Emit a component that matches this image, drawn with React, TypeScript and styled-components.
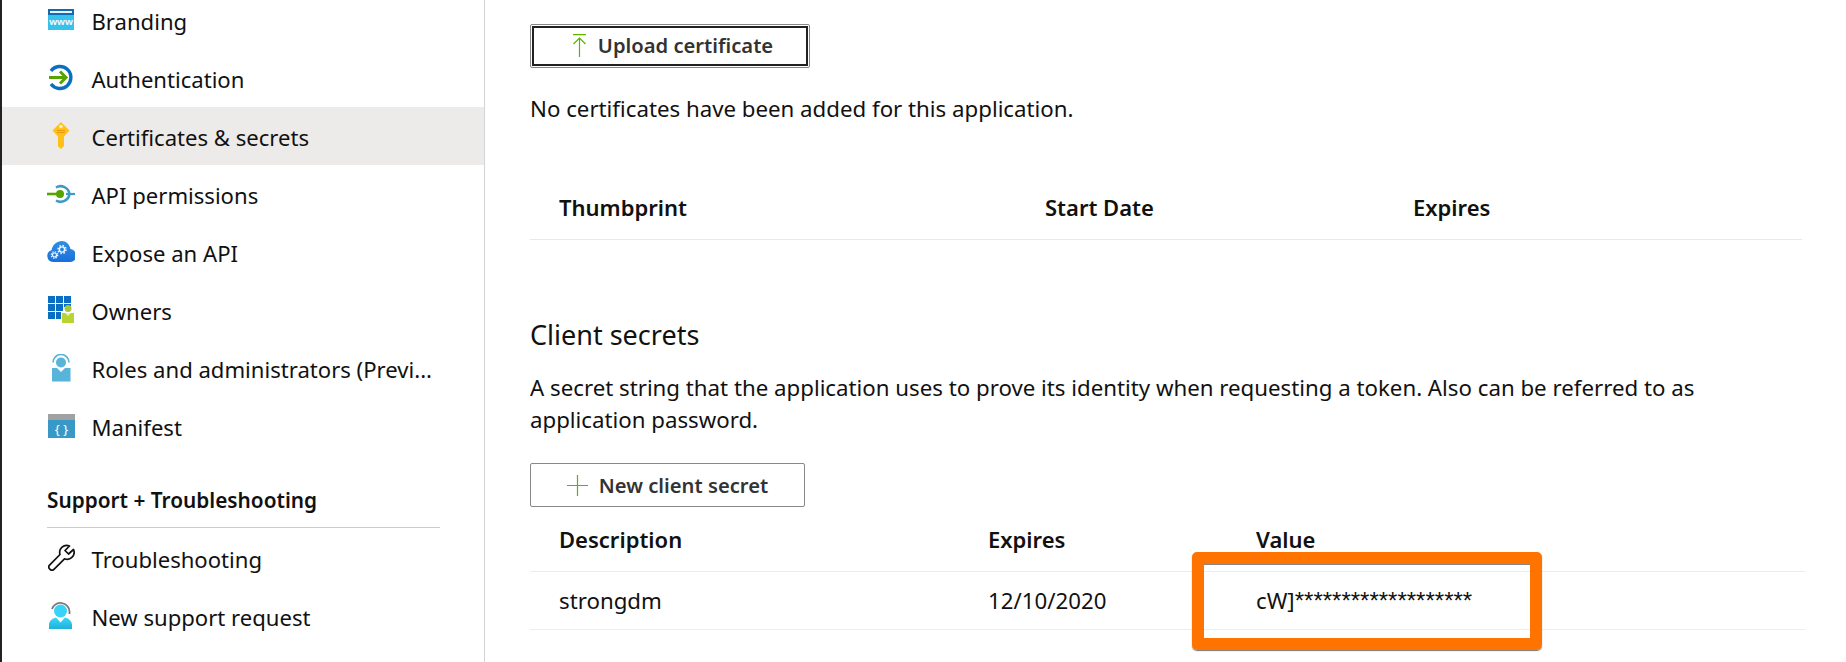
import React from 'react'
import styled, { createGlobalStyle } from 'styled-components'

const GlobalStyle = createGlobalStyle`
    html, body {
        margin: 0;
        padding: 0;
        background: #fff;
        overflow: hidden;
    }
    body {
        font-family: "Noto Sans", "Open Sans", sans-serif;
        color: #111;
    }
`

const Page = styled.div`
    display: grid;
    grid-template-columns: 483px 1fr;
    width: 1846px;
    height: 662px;
    overflow: hidden;
    border-left: 2px solid #222;
    box-sizing: border-box;
`

const Sidebar = styled.nav`
    border-right: 1px solid #d4d4d4;
    margin-top: -9px;
`

const NavRow = styled.div<{ $active?: boolean }>`
    box-sizing: border-box;
    height: 58px;
    display: flex;
    align-items: center;
    gap: 16.5px;
    padding: 2px 0 0 45px;
    font-size: 22.1px;
    white-space: nowrap;
    background: ${p => (p.$active ? '#edebe9' : 'transparent')};
`

const IconSlot = styled.span`
    width: 28px;
    height: 28px;
    flex: none;
    display: flex;
    align-items: center;
    justify-content: center;
    margin-top: -3px;

    svg {
        display: block;
    }
`

const SectionTitle = styled.div`
    margin: 31px 0 1px 45px;
    width: 393px;
    padding-bottom: 13px;
    border-bottom: 1px solid #ccc;
    font-size: 20.8px;
    font-weight: 600;
    line-height: 28px;
`

const Main = styled.main`
    padding: 24px 41px 0 45px;
`

const ActionButton = styled.div<{ $focused?: boolean; $width: number }>`
    box-sizing: border-box;
    width: ${p => p.$width}px;
    height: 44px;
    display: flex;
    align-items: center;
    justify-content: center;
    gap: 11px;
    padding: ${p => (p.$focused ? '0 0 2px 5px' : '0')};
    border: 1px solid #8a8886;
    border-radius: 2px;
    font-size: 20.2px;
    font-weight: 600;
    color: #333;
    background: #fff;
    outline: ${p => (p.$focused ? '2px solid #222' : 'none')};
    outline-offset: -4px;
`

const Note = styled.p`
    margin: 25px 0 0;
    font-size: 22.25px;
    line-height: 32px;
`

const Table = styled.div<{ $columns: string }>`
    display: grid;
    grid-template-columns: ${p => p.$columns};
    padding-left: 29px;
    align-items: center;
`

const HeaderTable = styled(Table)`
    margin-top: 49px;
    height: 66px;
    width: 1272px;
    box-sizing: border-box;
    border-bottom: 1px solid #e8e8e8;
`

const HeadCell = styled.div`
    font-size: 22px;
    font-weight: 600;
`

const Heading = styled.h2`
    margin: 77px 0 0;
    font-size: 27px;
    font-weight: 400;
    line-height: 36px;
`

const Description = styled.p`
    margin: 19px 0 0;
    font-size: 22.25px;
    line-height: 32px;
    width: 1175px;
`

const SecretHead = styled(Table)`
    height: 65px;
    width: 1275px;
    box-sizing: border-box;
    border-bottom: 1px solid #ededed;
`

const SecretRow = styled(Table)`
    height: 58px;
    width: 1275px;
    box-sizing: border-box;
    border-bottom: 1px solid #ededed;
    font-size: 22.25px;
`

const ButtonGap = styled.div`
    margin-top: 27px;
`

const Stars = styled.span`
    font-family: "Liberation Sans", sans-serif;
    font-size: 24px;
`

const Highlight = styled.div`
    position: absolute;
    left: 1192px;
    top: 552px;
    width: 350px;
    height: 98px;
    box-sizing: border-box;
    border: 12px solid #ff7300;
    border-radius: 5px;
    box-shadow: 0 1px 1px #777, inset 0 1px 0 #888;
`

const BrandingIcon = () => (
    <svg width="26" height="22" viewBox="0 0 26 22">
        <rect width="26" height="21" fill="#36c2ea" />
        <rect width="26" height="6" fill="#0f6cb3" />
        <rect x="2" y="2" width="22" height="2" fill="#e9f5fb" />
        <text x="13" y="16" textAnchor="middle" fontSize="9.5" fontWeight="600" fill="#fff" fontFamily="Noto Sans, sans-serif">www</text>
    </svg>
)

const AuthIcon = () => (
    <svg width="26" height="27" viewBox="0 0 26 27" fill="none">
        <path d="M3 7a11 11 0 1 1 0 13" stroke="#0a6fc2" strokeWidth="3.4" />
        <path d="M1 13.5h17M12 7.5l6 6-6 6" stroke="#57a300" strokeWidth="3" />
    </svg>
)

const KeyIcon = () => (
    <svg width="18" height="27" viewBox="0 0 18 27">
        <path d="M9 0l8.500 8.500L12 14.500V24l-3 3-3-2.500V14.500L.5 8.500z" fill="#ffc017" />
        <circle cx="9" cy="4.500" r="1.800" fill="#fff2c4" />
        <path d="M5 8.500h8M5 10.500h8" stroke="#e79b0c" strokeWidth="1" />
    </svg>
)

const ApiIcon = () => (
    <svg width="28" height="22" viewBox="0 0 28 22" fill="none">
        <path d="M9 4.500a9 9 0 0 1 13.500 6.500M22.500 11a9 9 0 0 1-13.500 6.500" stroke="#3d9bc9" strokeWidth="2.600" />
        <path d="M19 11h9" stroke="#3d9bc9" strokeWidth="2.200" />
        <path d="M0 11h12" stroke="#57a300" strokeWidth="2.600" />
        <circle cx="13" cy="11" r="4" fill="#57a300" />
    </svg>
)

const CloudIcon = () => (
    <svg width="28" height="22" viewBox="0 0 28 22">
        <defs>
            <linearGradient id="cloudG" x1="0" y1="0" x2="0" y2="1">
                <stop offset="0" stopColor="#2f8fe0" />
                <stop offset="1" stopColor="#1a6fdb" />
            </linearGradient>
        </defs>
        <path d="M6 21a6 6 0 0 1-1.500-11.700C5.500 3.500 10 0 15 0c4 0 7.500 3 8.500 8A6.500 6.500 0 0 1 22 21z" fill="url(#cloudG)" />
        <circle cx="15" cy="8.500" r="2.600" fill="none" stroke="#f2f8fe" strokeWidth="1.400" />
        <circle cx="15" cy="8.500" r="4" fill="none" stroke="#f2f8fe" strokeWidth="1.500" strokeDasharray="1.500 1.640" />
        <circle cx="7.500" cy="14" r="2" fill="none" stroke="#f2f8fe" strokeWidth="1.200" />
        <circle cx="7.500" cy="14" r="3.200" fill="none" stroke="#f2f8fe" strokeWidth="1.300" strokeDasharray="1.300 1.210" />
    </svg>
)

const OwnersIcon = () => (
    <svg width="26" height="27" viewBox="0 0 26 27">
        <path d="M0 0h7v7H0zM8 0h7v7H8zM16 0h7v7h-7zM0 8h7v7H0zM8 8h7v7H8zM16 8h7v3h-7zM0 16h7v7H0zM8 16h5v7H8z" fill="#0a6fc2" />
        <rect x="14" y="17" width="12" height="10" fill="#b8d432" />
        <circle cx="20" cy="12.500" r="3.500" fill="#a8c83a" />
        <path d="M17 17l3 3 3-3z" fill="#e8f2b5" />
    </svg>
)

const RolesIcon = () => (
    <svg width="20" height="28" viewBox="0 0 20 28" fill="none">
        <path d="M2 8.500a8 8 0 0 1 16 0" stroke="#59b4d9" strokeWidth="1.600" />
        <circle cx="10" cy="8.500" r="5" fill="#59b4d9" />
        <path d="M1 14h5l4 4 4-4h5.500v13.500H1z" fill="#59b4d9" />
    </svg>
)

const ManifestIcon = () => (
    <svg width="27" height="24" viewBox="0 0 27 24">
        <rect width="27" height="24" fill="#3999c6" />
        <rect width="27" height="6" fill="#a0a1a2" />
        <text x="13.500" y="19.500" textAnchor="middle" fontSize="13" fill="#fff" fontFamily="Noto Sans, sans-serif">{'{ }'}</text>
    </svg>
)

const WrenchIcon = () => (
    <svg width="27" height="27" viewBox="0 0 27 27" fill="none">
        <path
            d="M25.500 5.500l-5 4.500-3.500-3.500L21.500 2a7 7 0 0 0-9.500 8.500L1.800 20.800a3 3 0 0 0 4.400 4.400L16.500 14.800a7 7 0 0 0 9-9.300z"
            stroke="#111"
            strokeWidth="1.700"
            strokeLinejoin="round"
        />
    </svg>
)

const SupportIcon = () => (
    <svg width="24" height="28" viewBox="0 0 24 28" fill="none">
        <defs>
            <linearGradient id="supG" x1="0" y1="0" x2="0" y2="1">
                <stop offset="0" stopColor="#3ad6f7" />
                <stop offset="1" stopColor="#1fb0dc" />
            </linearGradient>
        </defs>
        <path d="M3 7a9 9 0 0 1 17.500 2.500V12" stroke="#7a7a7a" strokeWidth="1.800" />
        <circle cx="11.500" cy="9" r="6.500" fill="#38d3f6" />
        <path d="M0 27v-4c0-4 3-6.500 7-7.500l4.500 5 4.500-5c4 1 7 3.500 7 7.500v4z" fill="url(#supG)" />
    </svg>
)

const UploadIcon = () => (
    <svg width="15" height="23" viewBox="0 0 15 23" fill="none" stroke="#5db300" strokeWidth="1.200">
        <path d="M1 .6h13M7.500 23V4M1.500 10l6-6 6 6" />
    </svg>
)

const PlusIcon = () => (
    <svg width="21" height="21" viewBox="0 0 21 21" fill="none" stroke="#5db300" strokeWidth="1.200">
        <path d="M10.500 0v21M0 10.500h21" />
    </svg>
)

const topItems: [React.ReactNode, string, boolean?][] = [
    [<BrandingIcon />, 'Branding'],
    [<AuthIcon />, 'Authentication'],
    [<KeyIcon />, 'Certificates & secrets', true],
    [<ApiIcon />, 'API permissions'],
    [<CloudIcon />, 'Expose an API'],
    [<OwnersIcon />, 'Owners'],
    [<RolesIcon />, 'Roles and administrators (Previ...'],
    [<ManifestIcon />, 'Manifest'],
]

const supportItems: [React.ReactNode, string][] = [
    [<WrenchIcon />, 'Troubleshooting'],
    [<SupportIcon />, 'New support request'],
]

const App = () => {
    return (
        <Page>
            <GlobalStyle />
            <Sidebar>
                {topItems.map(([icon, label, active]) => (
                    <NavRow key={label} $active={active}>
                        <IconSlot>{icon}</IconSlot>
                        {label}
                    </NavRow>
                ))}
                <SectionTitle>Support + Troubleshooting</SectionTitle>
                {supportItems.map(([icon, label]) => (
                    <NavRow key={label}>
                        <IconSlot>{icon}</IconSlot>
                        {label}
                    </NavRow>
                ))}
            </Sidebar>
            <Main>
                <ActionButton $focused $width={280}>
                    <UploadIcon />
                    Upload certificate
                </ActionButton>
                <Note>No certificates have been added for this application.</Note>
                <HeaderTable $columns="486px 368px 1fr">
                    <HeadCell>Thumbprint</HeadCell>
                    <HeadCell>Start Date</HeadCell>
                    <HeadCell>Expires</HeadCell>
                </HeaderTable>
                <Heading>Client secrets</Heading>
                <Description>
                    A secret string that the application uses to prove its identity when requesting a token. Also can be referred to as application password.
                </Description>
                <ButtonGap>
                    <ActionButton $width={275}>
                        <PlusIcon />
                        New client secret
                    </ActionButton>
                </ButtonGap>
                <SecretHead $columns="429px 268px 1fr">
                    <HeadCell>Description</HeadCell>
                    <HeadCell>Expires</HeadCell>
                    <HeadCell>Value</HeadCell>
                </SecretHead>
                <SecretRow $columns="429px 268px 1fr">
                    <div>strongdm</div>
                    <div>12/10/2020</div>
                    <div>cW]<Stars>*******************</Stars></div>
                </SecretRow>
            </Main>
            <Highlight />
        </Page>
    )
}

export default App
